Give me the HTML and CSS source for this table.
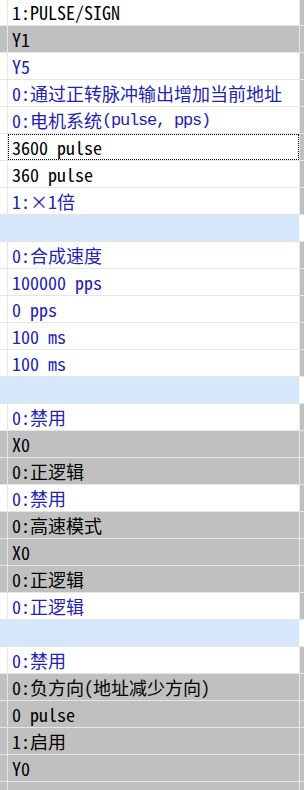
FILE: index.html
```html
<!DOCTYPE html>
<html>
<head>
  <meta charset="utf-8">
  <title>Axis Parameters</title>
  <link rel="stylesheet" href="styles.css">
</head>
<body>
  <div class="grid">
    <div class="row"><div class="gutter"></div><div class="cell">1:PULSE/SIGN</div><div class="next"></div></div>
    <div class="row ro"><div class="gutter"></div><div class="cell">Y1</div><div class="next"></div></div>
    <div class="row"><div class="gutter"></div><div class="cell set">Y5</div><div class="next"></div></div>
    <div class="row"><div class="gutter"></div><div class="cell set">0:通过正转脉冲输出增加当前地址</div><div class="next"></div></div>
    <div class="row"><div class="gutter"></div><div class="cell set">0:电机系统<span class="lat">(pulse, pps)</span></div><div class="next"></div></div>
    <div class="row"><div class="gutter"></div><div class="cell focus">3600 pulse</div><div class="next"></div></div>
    <div class="row"><div class="gutter"></div><div class="cell">360 pulse</div><div class="next"></div></div>
    <div class="row"><div class="gutter"></div><div class="cell set">1:×1倍</div><div class="next"></div></div>
    <div class="row group"><div class="band"></div><div class="next"></div></div>
    <div class="row"><div class="gutter"></div><div class="cell set">0:合成速度</div><div class="next"></div></div>
    <div class="row"><div class="gutter"></div><div class="cell set">100000 pps</div><div class="next"></div></div>
    <div class="row"><div class="gutter"></div><div class="cell set">0 pps</div><div class="next"></div></div>
    <div class="row"><div class="gutter"></div><div class="cell set">100 ms</div><div class="next"></div></div>
    <div class="row"><div class="gutter"></div><div class="cell set">100 ms</div><div class="next"></div></div>
    <div class="row group"><div class="band"></div><div class="next"></div></div>
    <div class="row"><div class="gutter"></div><div class="cell set">0:禁用</div><div class="next"></div></div>
    <div class="row ro"><div class="gutter"></div><div class="cell">X0</div><div class="next"></div></div>
    <div class="row ro"><div class="gutter"></div><div class="cell">0:正逻辑</div><div class="next"></div></div>
    <div class="row"><div class="gutter"></div><div class="cell set">0:禁用</div><div class="next"></div></div>
    <div class="row ro"><div class="gutter"></div><div class="cell">0:高速模式</div><div class="next"></div></div>
    <div class="row ro"><div class="gutter"></div><div class="cell">X0</div><div class="next"></div></div>
    <div class="row ro"><div class="gutter"></div><div class="cell">0:正逻辑</div><div class="next"></div></div>
    <div class="row"><div class="gutter"></div><div class="cell set">0:正逻辑</div><div class="next"></div></div>
    <div class="row group"><div class="band"></div><div class="next"></div></div>
    <div class="row"><div class="gutter"></div><div class="cell set">0:禁用</div><div class="next"></div></div>
    <div class="row ro"><div class="gutter"></div><div class="cell">0:负方向(地址减少方向)</div><div class="next"></div></div>
    <div class="row ro"><div class="gutter"></div><div class="cell">0 pulse</div><div class="next"></div></div>
    <div class="row ro"><div class="gutter"></div><div class="cell">1:启用</div><div class="next"></div></div>
    <div class="row ro"><div class="gutter"></div><div class="cell">Y0</div><div class="next"></div></div>
    <div class="row ro"><div class="gutter"></div><div class="cell"></div><div class="next"></div></div>
  </div>
</body>
</html>
```

FILE: styles.css
```css
html, body {
  margin: 0;
  padding: 0;
  background: #fff;
  overflow: hidden;
}

/* property grid, scrolled by one pixel */
.grid {
  margin-top: -1px;
  width: 304px;
  font-family: "Noto Sans Mono CJK SC", "Liberation Mono", "Noto Sans CJK SC", monospace;
  font-size: 18px;
  color: #000;
}

.row {
  display: grid;
  grid-template-columns: 7px 291px 4px;
  column-gap: 1px;
  height: 26px;
  border-bottom: 1px solid #e6e6e6;
  background: #e6e6e6;
}

.gutter,
.cell {
  background: #fff;
}

.cell {
  display: flex;
  align-items: center;
  padding-left: 4px;
  white-space: pre;
  overflow: hidden;
}

/* half width latin run, 9px per char */
.lat {
  font-family: "Liberation Mono", monospace;
  font-size: 17px;
  letter-spacing: -1.2px;
}

.next {
  background: #c0c0c0;
}

/* values the user has set */
.set {
  color: #2222b4;
}

/* read only rows */
.ro .gutter,
.ro .cell {
  background: #c0c0c0;
}

.focus {
  outline: 1px dotted #000;
  outline-offset: -1px;
}

/* group header band */
.group {
  background: #fff;
}
.group .band {
  grid-column: 1 / 3;
  background: #d6e6fb;
}
.group .next {
  background: #fff;
}
```
